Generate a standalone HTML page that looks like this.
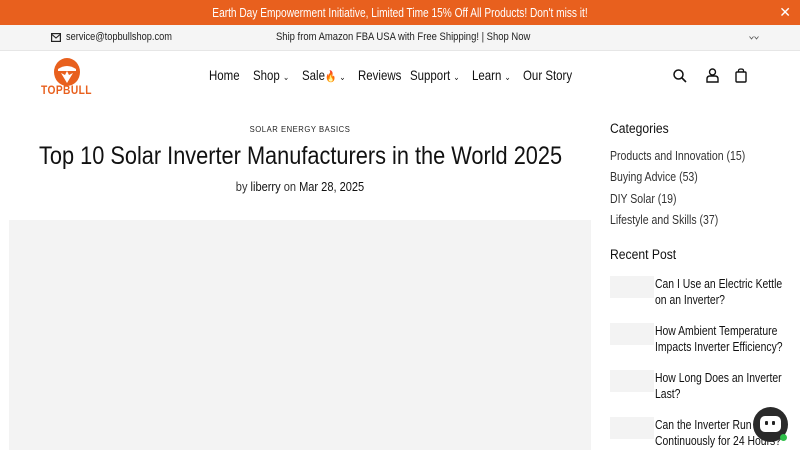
<!DOCTYPE html>
<html><head><style>
*{margin:0;padding:0;box-sizing:border-box}
body{width:800px;height:450px;overflow:hidden;background:#fff;font-family:"Liberation Sans",sans-serif;color:#111;position:relative}
.a{position:absolute;white-space:nowrap}
.l{transform-origin:left top}
.c{transform-origin:center top}
</style></head><body>
<div class="a" style="left:0;top:0;width:800px;height:25px;background:#e8601e"></div>
<div class="a c" style="left:0;top:0;width:800px;color:#fff;font-size:13px;text-align:center;line-height:25px;transform:scaleX(0.78)">Earth Day Empowerment Initiative, Limited Time 15% Off All Products! Don't miss it!</div>
<div class="a" style="right:9px;top:4px;color:#fff;font-size:14px">✕</div>
<div class="a" style="left:0;top:25px;width:800px;height:26px;background:#f5f5f5;border-bottom:1px solid #e6e6e6"></div>
<svg class="a" style="left:51px;top:33px" width="10" height="9" viewBox="0 0 10 9"><rect x="0.6" y="0.6" width="8.8" height="7.8" fill="none" stroke="#222" stroke-width="1.2"/><path d="M1 1.5L5 5L9 1.5" fill="none" stroke="#222" stroke-width="1.1"/></svg>
<div class="a l" style="left:66px;top:31px;font-size:11px;color:#222;transform:scaleX(0.84)">service@topbullshop.com</div>
<div class="a l" style="left:276px;top:31px;font-size:11px;color:#222;transform:scaleX(0.86)">Ship from Amazon FBA USA with Free Shipping! | Shop Now</div>
<svg class="a" style="left:749px;top:36px" width="10" height="4"><path d="M0.5 0.5L2.5 3L4.5 0.5M5.5 0.5L7.5 3L9.5 0.5" fill="none" stroke="#555" stroke-width="0.8"/></svg>
<svg class="a" style="left:53px;top:57px" width="28" height="30" viewBox="0 0 28 30"><ellipse cx="14" cy="15" rx="13" ry="14" fill="#e8601e"/><path d="M5 12Q14 6 23 12L23 14L5 14Z" fill="#fff"/><path d="M8 16L14 26L20 16L16 18L14 14L12 18Z" fill="#fff"/></svg>
<div class="a l" style="left:41px;top:83px;font-size:12px;font-weight:bold;color:#e8601e;letter-spacing:0.5px;transform:scaleX(0.85)">TOPBULL</div>
<div class="a l" style="left:209px;top:67px;font-size:14px;transform:scaleX(0.82)">Home</div>
<div class="a l" style="left:253px;top:67px;font-size:14px;transform:scaleX(0.82)">Shop <span style="font-size:9px">⌄</span></div>
<div class="a l" style="left:302px;top:67px;font-size:14px;transform:scaleX(0.82)">Sale<span style="font-size:11px">🔥</span> <span style="font-size:9px">⌄</span></div>
<div class="a l" style="left:358px;top:67px;font-size:14px;transform:scaleX(0.82)">Reviews</div>
<div class="a l" style="left:410px;top:67px;font-size:14px;transform:scaleX(0.82)">Support <span style="font-size:9px">⌄</span></div>
<div class="a l" style="left:472px;top:67px;font-size:14px;transform:scaleX(0.82)">Learn <span style="font-size:9px">⌄</span></div>
<div class="a l" style="left:523px;top:67px;font-size:14px;transform:scaleX(0.82)">Our Story</div>
<svg class="a" style="left:673px;top:69px" width="14" height="14"><circle cx="5.5" cy="5.5" r="4.5" fill="none" stroke="#111" stroke-width="1.5"/><path d="M9 9L13 13" stroke="#111" stroke-width="1.6"/></svg>
<svg class="a" style="left:706px;top:68px" width="13" height="15"><circle cx="6.5" cy="4" r="3" fill="none" stroke="#111" stroke-width="1.4"/><path d="M1 14V11Q1 8 4 8H9Q12 8 12 11V14Z" fill="none" stroke="#111" stroke-width="1.4"/></svg>
<svg class="a" style="left:735px;top:68px" width="12" height="15"><rect x="1" y="4" width="10" height="10" rx="1" fill="none" stroke="#111" stroke-width="1.4"/><path d="M3.5 4V2.5Q3.5 1 6 1Q8.5 1 8.5 2.5V4" fill="none" stroke="#111" stroke-width="1.3"/></svg>
<div class="a c" style="left:0;top:124px;width:600px;text-align:center;font-size:8.5px;letter-spacing:0.6px;color:#222;transform:scaleX(0.9)">SOLAR ENERGY BASICS</div>
<div class="a c" style="left:0;top:142px;width:600px;text-align:center;font-size:25px;color:#111;transform:scaleX(0.87)">Top 10 Solar Inverter Manufacturers in the World 2025</div>
<div class="a c" style="left:0;top:179px;width:600px;text-align:center;font-size:13px;color:#333;transform:scaleX(0.85)">by <span style="color:#111">liberry</span> on <span style="color:#111">Mar 28, 2025</span></div>
<div class="a" style="left:9px;top:220px;width:582px;height:230px;background:#f3f3f3"></div>
<div class="a l" style="left:610px;top:121px;font-size:13.5px;color:#111;transform:scaleX(0.9)">Categories</div>
<div class="a l" style="left:610px;top:145px;font-size:13px;color:#333;line-height:21.3px;transform:scaleX(0.81)">Products and Innovation (15)<br>Buying Advice (53)<br>DIY Solar (19)<br>Lifestyle and Skills (37)</div>
<div class="a l" style="left:610px;top:247px;font-size:13.5px;color:#111;transform:scaleX(0.9)">Recent Post</div>
<div class="a" style="left:610px;top:276px;width:44px;height:22px;background:#f3f3f3"></div>
<div class="a l" style="left:655px;top:276px;font-size:13px;line-height:16px;color:#111;transform:scaleX(0.8)">Can I Use an Electric Kettle<br>on an Inverter?</div>
<div class="a" style="left:610px;top:323px;width:44px;height:22px;background:#f3f3f3"></div>
<div class="a l" style="left:655px;top:323px;font-size:13px;line-height:16px;color:#111;transform:scaleX(0.8)">How Ambient Temperature<br>Impacts Inverter Efficiency?</div>
<div class="a" style="left:610px;top:370px;width:44px;height:22px;background:#f3f3f3"></div>
<div class="a l" style="left:655px;top:370px;font-size:13px;line-height:16px;color:#111;transform:scaleX(0.8)">How Long Does an Inverter<br>Last?</div>
<div class="a" style="left:610px;top:417px;width:44px;height:22px;background:#f3f3f3"></div>
<div class="a l" style="left:655px;top:417px;font-size:13px;line-height:16px;color:#111;transform:scaleX(0.8)">Can the Inverter Run<br>Continuously for 24 Hours?</div>
<div class="a" style="left:753px;top:407px;width:35px;height:35px;border-radius:50%;background:#2a2a2a"></div>
<div class="a" style="left:760px;top:416px;width:21px;height:16px;border-radius:5px;background:#fff"></div>
<div class="a" style="left:765px;top:421px;width:3px;height:4px;border-radius:1px;background:#222"></div>
<div class="a" style="left:772px;top:421px;width:3px;height:4px;border-radius:1px;background:#222"></div>
<div class="a" style="left:780px;top:434px;width:7px;height:7px;border-radius:50%;background:#2fbf4a"></div>
</body></html>
